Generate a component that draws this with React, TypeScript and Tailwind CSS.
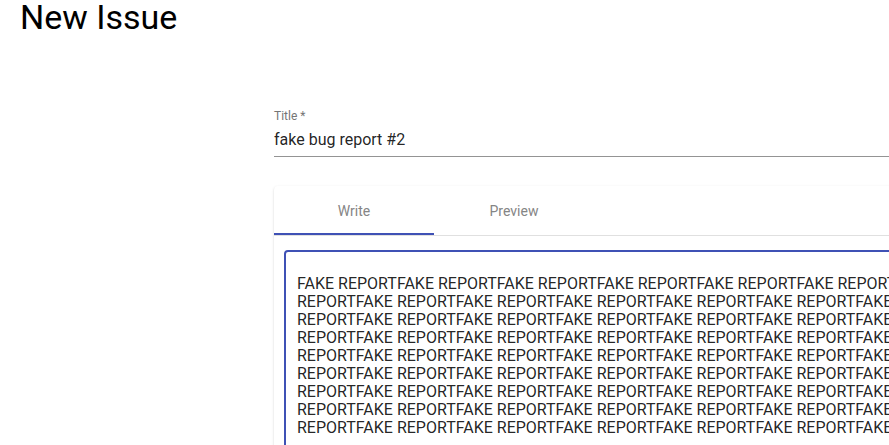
import React from "react";

const body = "FAKE REPORT".repeat(140);

const tabs = ["Write", "Preview"];

export default function App() {
  return (
    <div className="w-screen h-[445px] overflow-hidden bg-white font-['Roboto',sans-serif] text-[rgba(0,0,0,0.87)]">
      <h1 className="pl-5 text-[34px] leading-none font-normal text-black">
        New Issue
      </h1>

      <div className="ml-[274px] w-[900px] mt-[76px]">
        {/* title field */}
        <div className="flex flex-col border-b border-[#949494] pb-[7px]">
          <label className="text-xs leading-none text-[#757575]">Title *</label>
          <div className="mt-2 text-base leading-[19px]">fake bug report #2</div>
        </div>

        {/* editor card */}
        <div className="mt-[29px] bg-white rounded shadow-[0_2px_1px_-1px_rgba(0,0,0,0.2),0_1px_1px_0_rgba(0,0,0,0.14),0_1px_3px_0_rgba(0,0,0,0.12)]">
          <div className="flex h-[50px] border-b border-[#e0e0e0]">
            {tabs.map((t, i) => (
              <div
                key={t}
                className="relative w-40 flex items-center justify-center text-sm font-normal text-[#858585]"
              >
                {t}
                {i === 0 && (
                  <span className="absolute left-0 right-0 bottom-0 h-[2px] bg-[#3f51b5]" />
                )}
              </div>
            ))}
          </div>

          <div className="pt-[14px] px-[10px] pb-4">
            <div className="border-2 border-[#3f51b5] rounded pl-[11px] pr-3 pt-[23px] pb-5 h-[260px] overflow-hidden">
              <p className="h-[162px] overflow-hidden text-base leading-[18px] text-[rgba(0,0,0,0.87)]">
                {body}
              </p>
            </div>
          </div>
        </div>
      </div>
    </div>
  );
}
